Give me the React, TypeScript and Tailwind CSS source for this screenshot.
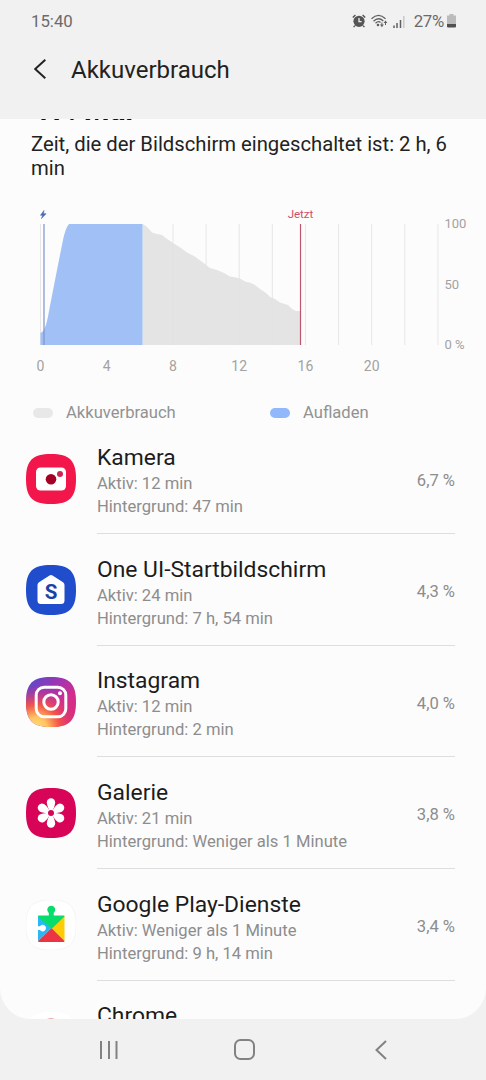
import type { ReactNode } from 'react'

interface AppUsage {
  name: string
  active: string
  background: string
  percent: string
  icon: ReactNode
}

const SQUIRCLE = 'M25 0C43.500 0 50 6.500 50 25S43.500 50 25 50 0 43.500 0 25 6.500 0 25 0Z'

function CameraIcon() {
  return (
    <svg viewBox="0 0 50 50" className="size-full">
      <path d={SQUIRCLE} fill="#f2164b" />
      <rect x="10" y="13.500" width="30" height="23" rx="4.500" fill="#fff" />
      <circle cx="25" cy="25.200" r="5.300" fill="#a50026" />
      <circle cx="34" cy="20" r="3" fill="#cf2450" />
    </svg>
  )
}

function HomeIcon() {
  return (
    <svg viewBox="0 0 50 50" className="size-full">
      <path d={SQUIRCLE} fill="#1f4dcb" />
      <path
        d="M23.500 10.600Q25 9.600 26.500 10.600L37 17.200Q38.500 18.200 38.500 20V35.500Q38.500 39 35 39H15Q11.500 39 11.500 35.500V20Q11.500 18.200 13 17.200Z"
        fill="#fff"
      />
      <text
        x="25"
        y="33.700"
        textAnchor="middle"
        fontSize="20.500"
        fontWeight="700"
        fill="#1a43a8"
      >
        S
      </text>
    </svg>
  )
}

function InstagramIcon() {
  return (
    <svg viewBox="0 0 50 50" className="size-full">
      <defs>
        <linearGradient id="ig-base" x1="0" y1="0" x2="1" y2="1">
          <stop offset="0" stopColor="#4a50cf" />
          <stop offset="0.35" stopColor="#9a35b5" />
          <stop offset="0.65" stopColor="#d52c8b" />
          <stop offset="1" stopColor="#d42f73" />
        </linearGradient>
        <radialGradient id="ig-glow" cx="0.2" cy="1.02" r="0.85">
          <stop offset="0" stopColor="#ffdc75" />
          <stop offset="0.25" stopColor="#ffc562" />
          <stop offset="0.55" stopColor="#f8593e" stopOpacity="0.9" />
          <stop offset="1" stopColor="#dc2f80" stopOpacity="0" />
        </radialGradient>
      </defs>
      <path d={SQUIRCLE} fill="url(#ig-base)" />
      <path d={SQUIRCLE} fill="url(#ig-glow)" />
      <g fill="none" stroke="#fff" strokeWidth="3">
        <rect x="10.200" y="10.200" width="29.600" height="29.600" rx="8" />
        <circle cx="25" cy="25" r="7.200" />
      </g>
      <circle cx="34" cy="16.300" r="2" fill="#fff" />
    </svg>
  )
}

function GalleryIcon() {
  return (
    <svg viewBox="0 0 50 50" className="size-full">
      <path d={SQUIRCLE} fill="#d70458" />
      {[0, 60, 120, 180, 240, 300].map((angle) => (
        <path
          key={angle}
          d="M23 21.500C21.800 19 20.800 16.500 20.800 14.500A4.200 4.200 0 0 1 29.200 14.500C29.200 16.500 28.200 19 27 21.500Z"
          fill="#fff"
          transform={`rotate(${angle} 25 25)`}
        />
      ))}
      <circle cx="25" cy="25" r="3.600" fill="none" stroke="#fff" strokeWidth="1.200" />
    </svg>
  )
}

function PlayServicesIcon() {
  return (
    <svg viewBox="0 0 50 50" className="size-full">
      <path d={SQUIRCLE} fill="#fff" stroke="#f3f3f3" strokeWidth="0.8" />
      <path d="M12 15.500L25.500 28 12 41Z" fill="#27b9f5" />
      <path d="M38.500 15.500V41L25.500 28Z" fill="#ffcb05" />
      <path d="M12 41L25.500 28 38.500 41Q38.500 42 37.500 42H13Q12 42 12 41Z" fill="#eb3544" />
      <path
        d="M13 15.500H22.800V12.900A4 4 0 1 1 27.700 12.900V15.500H37.500Q38.500 15.500 38.500 16.500L25.500 29 12 16.500Q12 15.500 13 15.500Z"
        fill="#08dc6b"
      />
      <path d="M11.500 26.200H14A3.300 3.300 0 1 1 14 30H11.500Z" fill="#fff" />
    </svg>
  )
}

function ChromeIcon() {
  return (
    <svg viewBox="0 0 50 50" className="size-full">
      <path d={SQUIRCLE} fill="#fff" />
      <circle cx="25" cy="25" r="18.500" fill="#c8474b" />
      <circle cx="25" cy="25" r="7" fill="#4c8bf5" stroke="#fff" strokeWidth="2" />
    </svg>
  )
}

const apps: AppUsage[] = [
  {
    name: 'Kamera',
    active: 'Aktiv: 12 min',
    background: 'Hintergrund: 47 min',
    percent: '6,7 %',
    icon: <CameraIcon />,
  },
  {
    name: 'One UI-Startbildschirm',
    active: 'Aktiv: 24 min',
    background: 'Hintergrund: 7 h, 54 min',
    percent: '4,3 %',
    icon: <HomeIcon />,
  },
  {
    name: 'Instagram',
    active: 'Aktiv: 12 min',
    background: 'Hintergrund: 2 min',
    percent: '4,0 %',
    icon: <InstagramIcon />,
  },
  {
    name: 'Galerie',
    active: 'Aktiv: 21 min',
    background: 'Hintergrund: Weniger als 1 Minute',
    percent: '3,8 %',
    icon: <GalleryIcon />,
  },
  {
    name: 'Google Play-Dienste',
    active: 'Aktiv: Weniger als 1 Minute',
    background: 'Hintergrund: 9 h, 14 min',
    percent: '3,4 %',
    icon: <PlayServicesIcon />,
  },
]

function StatusBar() {
  return (
    <div className="flex h-[42px] shrink-0 items-center justify-between pl-[31px] pr-[30px] text-[16.800px] text-[#6b6b6b]">
      <span className="mt-[2px]">15:40</span>
      <div className="flex items-center">
        <svg viewBox="0 0 14 14" className="mr-[5px] size-[14px]">
          <circle cx="7" cy="7.300" r="5.600" fill="#555" />
          <path
            d="M0.800 3.600L3.400 1M13.200 3.600L10.600 1M2.800 11.600L1.600 13.200M11.200 11.600L12.400 13.200"
            stroke="#555"
            strokeWidth="1.400"
          />
          <path d="M7 4V7.600H9.600" fill="none" stroke="#f1f1f1" strokeWidth="1.300" />
        </svg>
        <svg viewBox="0 0 17 14" className="mr-[5px] h-[14px] w-[17px]">
          <g fill="none" stroke="#606060" strokeWidth="1.300">
            <path d="M0.500 4.800Q7.500 -2 14.500 4.800" />
            <path d="M2.500 7.200Q7.500 2.500 12.300 7" />
            <path d="M4.500 9.300Q7.500 6.500 9.500 8.500" />
          </g>
          <circle cx="7" cy="11" r="1.300" fill="#606060" />
          <path d="M9 10.500H12.800L10.900 13.300ZM12.600 9H16.400L14.500 6.500Z" fill="#606060" />
          <path d="M10.900 8.500V11M14.500 9V11" stroke="#606060" />
        </svg>
        <svg viewBox="0 0 12 12" className="mr-[9px] mt-px size-3">
          <path d="M1 9.500V12M4 7V12M7.500 4V12" stroke="#606060" strokeWidth="1.500" />
          <path d="M10.800 0V12" stroke="#c9c9c9" strokeWidth="1.500" />
        </svg>
        <span className="mt-[2px] tracking-[-0.300px]">27%</span>
        <svg viewBox="0 0 9 14" className="ml-[3px] h-[14px] w-[9px]">
          <path d="M2.500 0H6.500V1.500H9V10H0V1.500H2.500Z" fill="#bbb" />
          <path d="M0 10H9V12.500Q9 13.500 8 13.500H1Q0 13.500 0 12.500Z" fill="#505050" />
        </svg>
      </div>
    </div>
  )
}

const CHART_LEFT = 40.5
const HOUR_WIDTH = 16.56
const gridHours = [0, 2, 4, 6, 8, 10, 12, 14, 16, 18, 20, 22, 24]
const labelHours = [0, 4, 8, 12, 16, 20]

function BatteryChart() {
  return (
    <svg viewBox="0 200 486 180" className="block h-[180px] w-full shrink-0" fontSize="14">
      {gridHours.map((h) => (
        <path key={h} d={`M${CHART_LEFT + h * HOUR_WIDTH} 224V345`} stroke="#e6e6e6" />
      ))}
      <path
        d="M142.500 224L146 226 149 229 152 232.500 157 234 162 235 165 237.500 173 243 181 248 187 252.500 194 256 201 261 206 265 210 268 217 270 224 273 230 276.500 236 277.500 241 279 245 281.500 251 283 255 285 260 289 266 293 270 297 275 299 280 302.500 288 305 292 309 296 311 300.500 311V345H142.500Z"
        fill="#e2e2e2"
        fillOpacity="0.93"
      />
      <path
        d="M40.500 345V333Q43 332 45 327.500 47 323 49 311L57 270 63 240Q65.500 228 69 224H142.500V345Z"
        fill="#9dbef6"
        fillOpacity="0.97"
      />
      <path d="M44 224V345" stroke="#7f93c8" strokeWidth="1.200" />
      <path
        d="M44 210.500L40.500 215.300H42.700L41.500 218.500 46 213.700H43.400Z"
        fill="#4669b8"
        stroke="#4669b8"
        strokeWidth="0.600"
      />
      <path d="M300.500 224V345" stroke="#c0566c" strokeWidth="1.200" />
      <text x="300.500" y="218" textAnchor="middle" fontSize="11.500" fill="#cf4e67">
        Jetzt
      </text>
      <g fill="#a2a2a2">
        {labelHours.map((h) => (
          <text key={h} x={CHART_LEFT + h * HOUR_WIDTH} y="371" textAnchor="middle">
            {h}
          </text>
        ))}
        <text x="444.500" y="228" fontSize="13">100</text>
        <text x="444.500" y="289" fontSize="13">50</text>
        <text x="444.500" y="349" fontSize="13">0 %</text>
      </g>
    </svg>
  )
}

function AppRow({ app }: { app: AppUsage }) {
  return (
    <div className="flex h-[111.650px] shrink-0 pl-[26px] pr-[31px]">
      <div className="mt-[31px] size-[50px] shrink-0">{app.icon}</div>
      <div className="ml-[21px] flex flex-1 border-b border-[#dedede] pt-[21.500px]">
        <div className="flex-1 whitespace-nowrap">
          <p className="text-[22.850px] leading-[28px] text-[#1c1c1c]">{app.name}</p>
          <p className="text-[16.600px] leading-[23px] text-[#8d8d8d]">{app.active}</p>
          <p className="text-[16.600px] leading-[23px] text-[#8d8d8d]">{app.background}</p>
        </div>
        <span className="mt-[24.500px] text-[16.600px] leading-[23px] text-[#8d8d8d]">{app.percent}</span>
      </div>
    </div>
  )
}

export default function App() {
  return (
    <div className="flex h-[1080px] w-[486px] flex-col overflow-hidden bg-[#f1f1f1] font-['Roboto',sans-serif]">
      <StatusBar />
      <header className="flex h-[77px] shrink-0 items-start">
        <svg viewBox="0 0 12 20" className="ml-[34px] mt-[17px] h-5 w-3">
          <path d="M11.300 0.800L1.200 10 11.300 19.200" fill="none" stroke="#222" strokeWidth="2" />
        </svg>
        <h1 className="ml-[25px] mt-[12px] text-[24px] leading-[32px] text-[#222]">Akkuverbrauch</h1>
      </header>

      <main className="flex h-[900px] shrink-0 flex-col overflow-hidden rounded-b-[31px] bg-[#fcfcfc]">
        {/* Date heading is scrolled almost completely under the header */}
        <div className="flex h-[13px] shrink-0 items-end overflow-hidden pl-[34px]">
          <p className="mb-[6px] text-[29.500px] font-bold leading-[32px] text-[#111]">17. Mai</p>
        </div>
        <p className="h-[68px] shrink-0 pl-[31px] pr-6 text-[20.250px] leading-[24px] text-[#222]">
          Zeit, die der Bildschirm eingeschaltet ist: 2 h, 6 min
        </p>
        <BatteryChart />
        <div className="flex h-[42.500px] shrink-0 items-start pl-[33px] pt-[20px] text-[16.600px] leading-[25px] text-[#929292]">
          <div className="flex w-[237px] items-center">
            <span className="mr-[13px] h-[10px] w-5 rounded-full bg-[#e8e8e8]" />
            Akkuverbrauch
          </div>
          <div className="flex items-center">
            <span className="mr-[13px] h-[10px] w-5 rounded-full bg-[#91b8fa]" />
            Aufladen
          </div>
        </div>
        {apps.map((app) => (
          <AppRow key={app.name} app={app} />
        ))}
        <div className="flex shrink-0 pl-[26px]">
          <div className="mt-[31px] size-[50px] shrink-0">
            <ChromeIcon />
          </div>
          <p className="ml-[21px] mt-[21px] text-[22.850px] leading-[28px] text-[#1c1c1c]">Chrome</p>
        </div>
      </main>

      <nav className="flex h-[61px] shrink-0 items-center pl-[99px]">
        <svg viewBox="0 0 20 20" className="size-5" stroke="#828282" strokeWidth="2">
          <path d="M2 1V19M10 1V19M17.500 1V19" />
        </svg>
        <svg viewBox="0 0 21 21" className="ml-[115px] size-[21px]" fill="none" stroke="#828282" strokeWidth="2">
          <rect x="1" y="1" width="19" height="19" rx="5.500" />
        </svg>
        <svg viewBox="0 0 12 20" className="ml-[120px] h-5 w-3" fill="none" stroke="#828282" strokeWidth="2">
          <path d="M11 1L1.500 10 11 19" />
        </svg>
      </nav>
    </div>
  )
}
